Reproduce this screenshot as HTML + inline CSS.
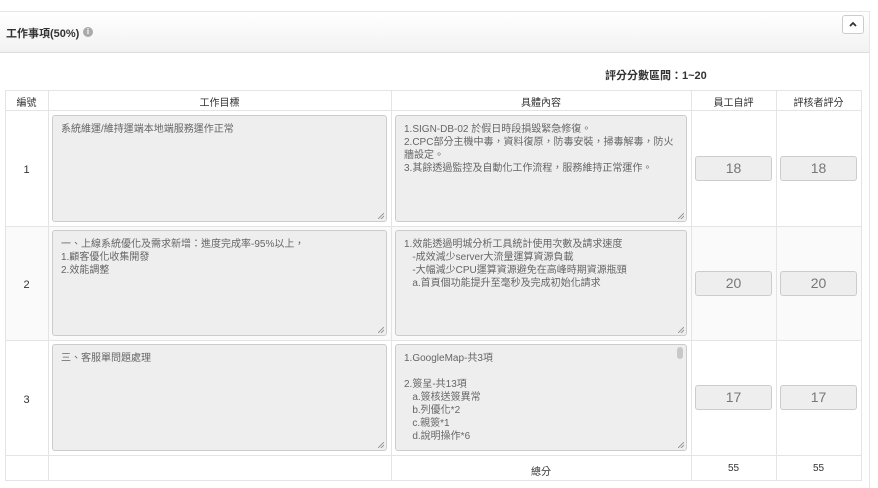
<!DOCTYPE html>
<html><head><meta charset="utf-8"><style>
*{box-sizing:border-box;margin:0;padding:0}
body{width:878px;height:488px;background:#fff;font-family:"Liberation Sans","Noto Sans CJK TC",sans-serif;color:#333;position:relative;overflow:hidden;font-size:11px}
.a{position:absolute}
.panel{left:0;top:11px;width:870px;height:477px;border-top:1px solid #e6e6e6;border-right:1px solid #e6e6e6}
.head{left:0;top:12px;width:869px;height:41px;background:linear-gradient(#fff,#f2f2f2);border-bottom:1px solid #ddd}
.hl{position:absolute;background:#e4e4e4}
.ta{position:absolute;background:#eee;border:1px solid #ccc;border-radius:3px;color:#666;font-size:10px;line-height:13px;padding:7px 8px;white-space:pre}
.ta:after{content:"";position:absolute;right:2px;bottom:2px;width:6px;height:6px;background:linear-gradient(135deg,transparent 45%,#999 46%,#999 55%,transparent 56%,transparent 70%,#999 71%,#999 80%,transparent 81%)}
.in{position:absolute;background:#eee;border:1px solid #ccc;border-radius:3px;color:#777;font-size:14px;text-align:center;line-height:23px;height:25px;width:77px}
.c{position:absolute;text-align:center;font-size:10px;color:#333}
</style></head><body>
<div class="a panel"></div>
<div class="a head"></div>
<div class="a" style="left:6px;top:25px;font-size:11px;font-weight:bold;color:#333">工作事項(50%)</div>
<div class="a" style="left:83px;top:27px;width:10px;height:10px;border-radius:50%;background:#aaa;color:#fff;font-size:8px;line-height:10px;text-align:center;font-weight:bold">i</div>
<div class="a" style="left:842px;top:15px;width:22px;height:19px;border:1px solid #ccc;border-radius:3px;background:#fff">
<svg width="20" height="17" style="position:absolute;left:0;top:0"><path d="M7 10 L10 7 L13 10" stroke="#333" stroke-width="1.8" fill="none"/></svg></div>
<div class="a" style="left:605px;top:67px;font-size:11px;font-weight:bold;color:#333">評分分數區間：1~20</div>

<div class="a" style="left:5px;top:226px;width:857px;height:114px;background:#fafafa"></div>
<div class="hl" style="left:5px;top:90px;width:857px;height:1px"></div>
<div class="hl" style="left:5px;top:110px;width:857px;height:1px"></div>
<div class="hl" style="left:5px;top:226px;width:857px;height:1px"></div>
<div class="hl" style="left:5px;top:340px;width:857px;height:1px"></div>
<div class="hl" style="left:5px;top:455px;width:857px;height:1px"></div>
<div class="hl" style="left:5px;top:480px;width:857px;height:1px"></div>
<div class="hl" style="left:5px;top:90px;width:1px;height:391px"></div>
<div class="hl" style="left:48px;top:90px;width:1px;height:391px"></div>
<div class="hl" style="left:391px;top:90px;width:1px;height:391px"></div>
<div class="hl" style="left:691px;top:90px;width:1px;height:391px"></div>
<div class="hl" style="left:776px;top:90px;width:1px;height:391px"></div>
<div class="hl" style="left:861px;top:90px;width:1px;height:391px"></div>

<div class="c" style="left:5px;width:43px;top:94px">編號</div>
<div class="c" style="left:48px;width:343px;top:94px">工作目標</div>
<div class="c" style="left:391px;width:300px;top:94px">具體內容</div>
<div class="c" style="left:691px;width:85px;top:94px">員工自評</div>
<div class="c" style="left:776px;width:85px;top:94px">評核者評分</div>

<div class="c" style="left:5px;width:43px;top:164px;font-size:11px">1</div>
<div class="c" style="left:5px;width:43px;top:279px;font-size:11px">2</div>
<div class="c" style="left:5px;width:43px;top:394px;font-size:11px">3</div>

<div class="ta" style="left:52px;top:115px;width:335px;height:107px">系統維運/維持運端本地端服務運作正常</div>
<div class="ta" style="left:52px;top:230px;width:335px;height:106px">一、上線系統優化及需求新增：進度完成率-95%以上，
1.顧客優化收集開發
2.效能調整</div>
<div class="ta" style="left:52px;top:344px;width:335px;height:107px">三、客服單問題處理</div>

<div class="ta" style="left:395px;top:115px;width:292px;height:107px">1.SIGN-DB-02 於假日時段損毀緊急修復。
2.CPC部分主機中毒，資料復原，防毒安裝，掃毒解毒，防火
牆設定。
3.其餘透過監控及自動化工作流程，服務維持正常運作。</div>
<div class="ta" style="left:395px;top:230px;width:292px;height:106px">1.效能透過明城分析工具統計使用次數及請求速度
   -成效減少server大流量運算資源負載
   -大幅減少CPU運算資源避免在高峰時期資源瓶頸
   a.首頁個功能提升至毫秒及完成初始化請求</div>
<div class="ta" style="left:395px;top:344px;width:292px;height:107px;overflow:hidden">1.GoogleMap-共3項

2.簽呈-共13項
   a.簽核送簽異常
   b.列優化*2
   c.親簽*1
   d.說明操作*6<div style="position:absolute;right:3px;top:2px;width:6px;height:12px;border-radius:3px;background:#c8c8c8"></div></div>

<div class="in" style="left:695px;top:156px">18</div>
<div class="in" style="left:780px;top:156px">18</div>
<div class="in" style="left:695px;top:271px">20</div>
<div class="in" style="left:780px;top:271px">20</div>
<div class="in" style="left:695px;top:385px">17</div>
<div class="in" style="left:780px;top:385px">17</div>

<div class="c" style="left:391px;width:300px;top:463px">總分</div>
<div class="c" style="left:691px;width:85px;top:463px">55</div>
<div class="c" style="left:776px;width:85px;top:463px">55</div>
</body></html>
